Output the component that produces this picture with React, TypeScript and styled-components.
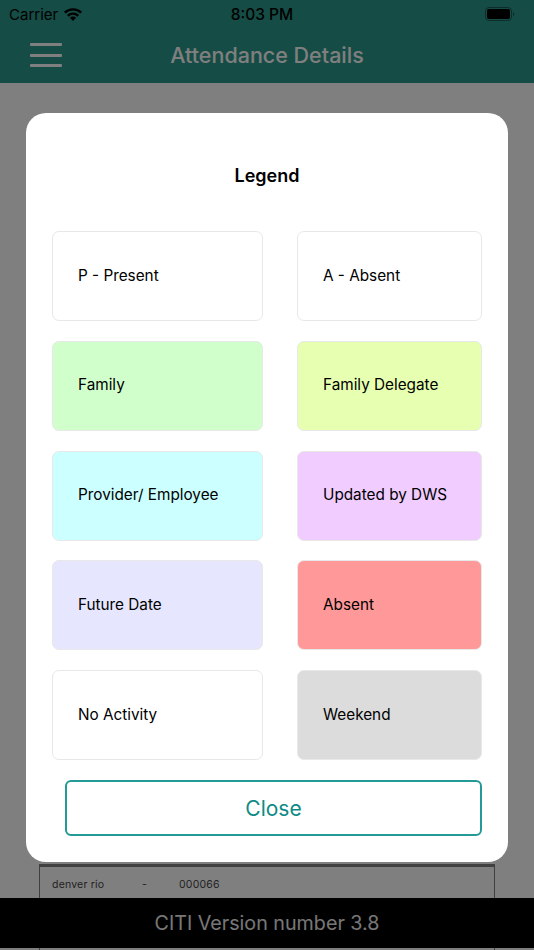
import React from 'react';
import styled, { createGlobalStyle } from 'styled-components';

const GlobalStyle = createGlobalStyle`
  html, body {
    margin: 0;
    padding: 0;
    background: #fff;
  }
  body {
    font-family: Inter, "Liberation Sans", sans-serif;
  }
`;

const Page = styled.div`
  position: relative;
  width: 534px;
  height: 950px;
  display: flex;
  flex-direction: column;
  overflow: hidden;
`;

const Header = styled.header`
  height: 83px;
  flex: none;
  box-sizing: border-box;
  background: #2a988a;
  display: flex;
  flex-direction: column;
`;

const StatusBar = styled.div`
  height: 28px;
  display: grid;
  grid-template-columns: 1fr auto 1fr;
  align-items: center;
  padding: 0 19px 0 9px;
  font-size: 15px;
  color: #000;
`;

const Carrier = styled.span`
  display: flex;
  align-items: center;
  gap: 5px;
`;

const Clock = styled.span`
  font-weight: 500;
  font-size: 15.5px;
`;

const Battery = styled.span`
  display: flex;
  justify-content: flex-end;
`;

const NavBar = styled.div`
  flex: 1;
  display: grid;
  grid-template-columns: 1fr auto 1fr;
  align-items: center;
  padding-bottom: 1px;
`;

const Burger = styled.div`
  width: 32px;
  margin-left: 30px;
  display: flex;
  flex-direction: column;
  gap: 7.5px;
`;

const BurgerBar = styled.span`
  height: 3px;
  border-radius: 1px;
  background: #fff;
`;

const NavTitle = styled.h1`
  margin: 0;
  color: #fff;
  font-size: 21.5px;
  font-weight: 500;
`;

const Content = styled.main`
  flex: 1;
  display: flex;
  flex-direction: column;
  justify-content: flex-end;
  padding: 0 39px;
`;

const TableRow = styled.div`
  height: 34px;
  box-sizing: border-box;
  border: 1px solid #808080;
  border-top-width: 3px;
  border-bottom: 0;
  display: flex;
  align-items: center;
  padding: 3px 0 0 12px;
  font-size: 10.5px;
  letter-spacing: 0.2px;
  color: #444;
`;

const Cell = styled.span<{ $width: number }>`
  width: ${p => p.$width}px;
`;

const Footer = styled.footer`
  height: 50px;
  flex: none;
  background: #000;
  color: #eee;
  font-size: 19.7px;
  display: flex;
  align-items: center;
  justify-content: center;
`;

const TableTail = styled.div`
  height: 2px;
  flex: none;
  margin: 0 39px;
  border: solid #808080;
  border-width: 0 1px;
`;

const Backdrop = styled.div`
  position: absolute;
  inset: 0;
  background: rgba(0, 0, 0, 0.5);
`;

const Modal = styled.section`
  position: absolute;
  left: 26px;
  top: 113px;
  width: 482px;
  height: 749px;
  box-sizing: border-box;
  background: #fff;
  border-radius: 20px;
  padding: 53px 26px 0;
`;

const ModalTitle = styled.h2`
  margin: 0 0 46px;
  height: 19px;
  line-height: 19px;
  text-align: center;
  font-size: 18px;
  font-weight: 600;
  color: #000;
`;

const LegendGrid = styled.div`
  display: grid;
  grid-template-columns: 211px 185px;
  grid-auto-rows: 90px;
  column-gap: 34px;
  row-gap: 19.75px;
`;

const LegendItem = styled.div<{ $bg: string }>`
  box-sizing: border-box;
  background: ${p => p.$bg};
  border: 1px solid #e8e8e8;
  border-radius: 7px;
  display: flex;
  align-items: center;
  padding: 0 0 2px 25px;
  font-size: 15.3px;
  color: #000;
`;

const CloseButton = styled.button`
  display: block;
  box-sizing: border-box;
  width: 417px;
  height: 56px;
  margin: 20px 0 0 13px;
  background: #fff;
  border: 2px solid #239a96;
  border-radius: 6px;
  color: #0e8a86;
  font-family: inherit;
  font-size: 21px;
  padding: 0;
`;

const legend = [
  { label: 'P - Present', bg: '#ffffff' },
  { label: 'A - Absent', bg: '#ffffff' },
  { label: 'Family', bg: '#d0ffcc' },
  { label: 'Family Delegate', bg: '#e6ffb0' },
  { label: 'Provider/ Employee', bg: '#ccffff' },
  { label: 'Updated by DWS', bg: '#f0ccff' },
  { label: 'Future Date', bg: '#e6e6ff' },
  { label: 'Absent', bg: '#ff9999' },
  { label: 'No Activity', bg: '#ffffff' },
  { label: 'Weekend', bg: '#dcdcdc' },
];

const WifiIcon = () => (
  <svg width="20" height="15" viewBox="0 0 20 14">
    <path d="M1.800 5.200A11.800 11.800 0 0 1 18.200 5.200" fill="none" stroke="#000" strokeWidth="2.400" />
    <path d="M4.800 8.300A7.400 7.400 0 0 1 15.200 8.300" fill="none" stroke="#000" strokeWidth="2.400" />
    <path d="M10 13.400L6.900 10.300A4.400 4.400 0 0 1 13.100 10.300Z" fill="#000" />
  </svg>
);

const BatteryIcon = () => (
  <svg width="30" height="14" viewBox="0 0 30 14">
    <rect x="0.500" y="0.500" width="26" height="13" rx="3.500" fill="none" stroke="#000" strokeOpacity="0.4" />
    <rect x="2" y="2" width="23" height="10" rx="2" fill="#000" />
    <path d="M28 5v4c.8-.3 1.300-1.100 1.300-2s-.5-1.700-1.300-2z" fill="#000" fillOpacity="0.4" />
  </svg>
);

const App: React.FC = () => {
  return (
    <Page>
      <GlobalStyle />
      <Header>
        <StatusBar>
          <Carrier>
            Carrier
            <WifiIcon />
          </Carrier>
          <Clock>8:03 PM</Clock>
          <Battery>
            <BatteryIcon />
          </Battery>
        </StatusBar>
        <NavBar>
          <Burger>
            <BurgerBar />
            <BurgerBar />
            <BurgerBar />
          </Burger>
          <NavTitle>Attendance Details</NavTitle>
        </NavBar>
      </Header>
      <Content>
        <TableRow>
          <Cell $width={90}>denver rio</Cell>
          <Cell $width={37}>-</Cell>
          <Cell $width={60}>000066</Cell>
        </TableRow>
      </Content>
      <Footer>CITI Version number 3.8</Footer>
      <TableTail />
      <Backdrop />
      <Modal>
        <ModalTitle>Legend</ModalTitle>
        <LegendGrid>
          {legend.map(item => (
            <LegendItem key={item.label} $bg={item.bg}>
              {item.label}
            </LegendItem>
          ))}
        </LegendGrid>
        <CloseButton>Close</CloseButton>
      </Modal>
    </Page>
  );
};

export default App;
